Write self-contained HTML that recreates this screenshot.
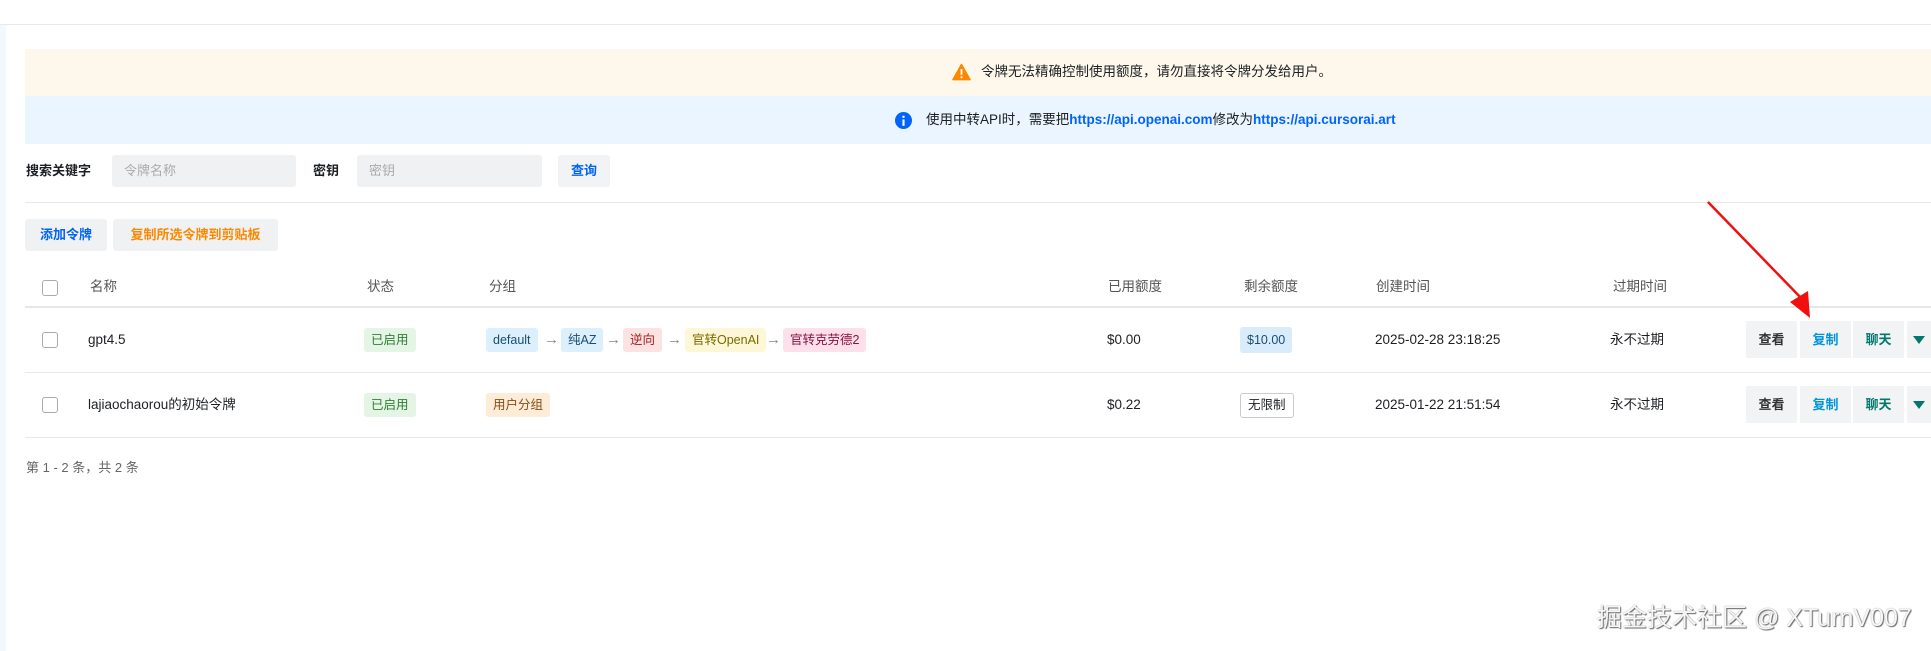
<!DOCTYPE html>
<html><head><meta charset="utf-8"><style>
*{margin:0;padding:0;box-sizing:border-box}
body{width:1931px;height:651px;background:#fff;font-family:"Liberation Sans","Noto Sans CJK SC",sans-serif;font-size:13.5px;line-height:18px;color:#1c1f23;position:relative;overflow:hidden}
.a{position:absolute;white-space:nowrap}
.tag{position:absolute;height:24px;line-height:24px;padding:0 7px;border-radius:3px;font-size:12.5px;top:328px}
.arrow{position:absolute;color:#888;font-size:15px;top:331px;line-height:18px;font-weight:bold}
.btn{position:absolute;height:37px;line-height:37px;text-align:center;background:#f2f3f5;font-weight:bold;font-size:13px}
.cb{position:absolute;width:16px;height:16px;border:1.5px solid #aaa;border-radius:3px;left:42px;background:#fff}
.hl{position:absolute;left:25px;right:0;height:1px;background:#e8e9eb}
.th{position:absolute;top:278px;color:#555;font-size:13.5px;line-height:18px}
</style></head><body>
<div class="a" style="left:0;top:24px;width:1931px;height:1px;background:#e8e9eb"></div>
<div class="a" style="left:0;top:25px;width:6px;height:626px;background:#f3f8fc"></div>
<div class="a" style="left:25px;top:49px;width:1906px;height:47px;background:#fef8ec"></div>
<svg class="a" style="left:952px;top:63px" width="19" height="18" viewBox="0 0 20 18"><path d="M10 1L19 17H1Z" fill="#fc8800" stroke="#fc8800" stroke-linejoin="round" stroke-width="1.5"/><rect x="9" y="6" width="2" height="6" fill="#fff"/><rect x="9" y="13.5" width="2" height="2" fill="#fff"/></svg>
<div class="a" style="left:981px;top:63px;font-size:13.5px">令牌无法精确控制使用额度，请勿直接将令牌分发给用户。</div>
<div class="a" style="left:25px;top:96px;width:1906px;height:48px;background:#eaf5ff"></div>
<svg class="a" style="left:895px;top:112px" width="17" height="17" viewBox="0 0 16 16"><circle cx="8" cy="8" r="8" fill="#0064fa"/><rect x="7" y="7" width="2" height="6" fill="#fff"/><rect x="7" y="3.5" width="2" height="2" fill="#fff"/></svg>
<div class="a" style="left:926px;top:111px;font-size:13.5px">使用中转API时，需要把<b style="color:#0064fa">https://api.openai.com</b>修改为<b style="color:#0064fa">https://api.cursorai.art</b></div>
<div class="a" style="left:26px;top:162px;font-weight:bold;font-size:13px">搜索关键字</div>
<div class="a" style="left:112px;top:155px;width:184px;height:32px;background:#f0f1f2;border-radius:3px;color:#aaa;padding:7px 12px;font-size:13px">令牌名称</div>
<div class="a" style="left:313px;top:162px;font-weight:bold;font-size:13px">密钥</div>
<div class="a" style="left:357px;top:155px;width:185px;height:32px;background:#f0f1f2;border-radius:3px;color:#aaa;padding:7px 12px;font-size:13px">密钥</div>
<div class="a" style="left:558px;top:155px;width:52px;height:32px;background:#f2f3f5;border-radius:3px;color:#0064fa;font-weight:bold;text-align:center;line-height:32px;font-size:13px">查询</div>
<div class="hl" style="top:202px"></div>
<div class="a" style="left:25px;top:219px;width:82px;height:32px;background:#f0f1f2;border-radius:3px;color:#0064fa;font-weight:bold;text-align:center;line-height:32px;font-size:13px">添加令牌</div>
<div class="a" style="left:113px;top:219px;width:165px;height:32px;background:#f0f1f2;border-radius:3px;color:#fc8800;font-weight:bold;text-align:center;line-height:32px;font-size:13px">复制所选令牌到剪贴板</div>
<div class="cb" style="top:280px"></div>
<div class="th" style="left:90px">名称</div><div class="th" style="left:367px">状态</div><div class="th" style="left:489px">分组</div>
<div class="th" style="left:1108px">已用额度</div><div class="th" style="left:1244px">剩余额度</div><div class="th" style="left:1376px">创建时间</div><div class="th" style="left:1613px">过期时间</div>
<div class="hl" style="top:306px;height:2px;background:#e6e7e9"></div>
<div class="cb" style="top:332px"></div>
<div class="a" style="left:88px;top:331px">gpt4.5</div>
<div class="tag" style="left:364px;background:#e4f5e6;color:#2e7d32">已启用</div>
<div class="tag" style="left:486px;background:#dbeffc;color:#1b4d72">default</div><div class="arrow" style="left:544px">→</div>
<div class="tag" style="left:561px;background:#dbeffc;color:#1b4d72">纯AZ</div><div class="arrow" style="left:606px">→</div>
<div class="tag" style="left:623px;background:#fde2e2;color:#a12020">逆向</div><div class="arrow" style="left:667px">→</div>
<div class="tag" style="left:685px;background:#fdf7d8;color:#7a6a00">官转OpenAI</div><div class="arrow" style="left:766px">→</div>
<div class="tag" style="left:783px;background:#fde0ea;color:#8a1240">官转克劳德2</div>
<div class="a" style="left:1107px;top:331px">$0.00</div>
<div class="tag" style="left:1240px;top:327px;background:#d8ecfb;color:#1b4d72;height:26px;line-height:26px">$10.00</div>
<div class="a" style="left:1375px;top:331px">2025-02-28 23:18:25</div>
<div class="a" style="left:1610px;top:331px">永不过期</div>
<div class="hl" style="top:372px"></div>
<div class="cb" style="top:397px"></div>
<div class="a" style="left:88px;top:396px">lajiaochaorou的初始令牌</div>
<div class="tag" style="left:364px;top:393px;background:#e4f5e6;color:#2e7d32">已启用</div>
<div class="tag" style="left:486px;top:393px;background:#fdecd8;color:#8a4a10">用户分组</div>
<div class="a" style="left:1107px;top:396px">$0.22</div>
<div class="a" style="left:1240px;top:393px;height:25px;line-height:23px;padding:0 7px;border:1px solid #ccc;border-radius:3px;font-size:12.5px">无限制</div>
<div class="a" style="left:1375px;top:396px">2025-01-22 21:51:54</div>
<div class="a" style="left:1610px;top:396px">永不过期</div>
<div class="hl" style="top:437px"></div>
<div class="a" style="left:26px;top:459px;color:#666;font-size:13px">第 1 - 2 条，共 2 条</div>
<div class="btn" style="left:1746px;top:321px;width:51px;color:#333">查看</div>
<div class="btn" style="left:1800px;top:321px;width:51px;color:#0095d8">复制</div>
<div class="btn" style="left:1853px;top:321px;width:51px;color:#00786a">聊天</div>
<div class="btn" style="left:1907px;top:321px;width:30px"><svg width="14" height="10" viewBox="0 0 14 10" style="margin-top:14px;margin-right:6px"><path d="M1 1H13L7 9Z" fill="#00786a"/></svg></div>
<div class="btn" style="left:1746px;top:386px;width:51px;color:#333">查看</div>
<div class="btn" style="left:1800px;top:386px;width:51px;color:#0095d8">复制</div>
<div class="btn" style="left:1853px;top:386px;width:51px;color:#00786a">聊天</div>
<div class="btn" style="left:1907px;top:386px;width:30px"><svg width="14" height="10" viewBox="0 0 14 10" style="margin-top:14px;margin-right:6px"><path d="M1 1H13L7 9Z" fill="#00786a"/></svg></div>
<svg class="a" style="left:0;top:0" width="1931" height="651"><line x1="1708" y1="202" x2="1803" y2="300" stroke="#f01010" stroke-width="2.5"/><path d="M1810 318 L1790 302 L1808 291 Z" fill="#f01010"/></svg>
<div class="a" style="left:1597px;top:604px;font-size:25px;line-height:28px;color:#f6f6f6;text-shadow:1px 1px 1px #666,0 0 1px #888">掘金技术社区 @ XTurnV007</div>
</body></html>
